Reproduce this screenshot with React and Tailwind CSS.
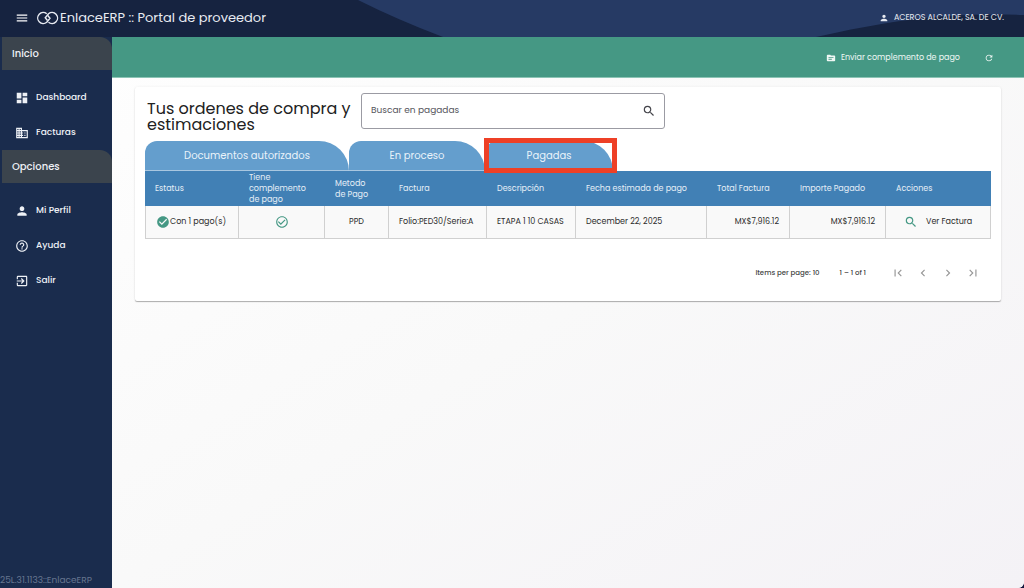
import {
  MdMenu,
  MdDashboard,
  MdDomain,
  MdPerson,
  MdHelpOutline,
  MdExitToApp,
  MdSource,
  MdRefresh,
  MdSearch,
  MdCheckCircle,
  MdCheckCircleOutline,
  MdFirstPage,
  MdChevronLeft,
  MdChevronRight,
  MdLastPage,
} from "react-icons/md";

const sections = [
  {
    title: "Inicio",
    items: [
      { label: "Dashboard", icon: MdDashboard },
      { label: "Facturas", icon: MdDomain },
    ],
  },
  {
    title: "Opciones",
    items: [
      { label: "Mi Perfil", icon: MdPerson },
      { label: "Ayuda", icon: MdHelpOutline },
      { label: "Salir", icon: MdExitToApp },
    ],
  },
];

const columns = [
  { label: "Estatus", width: "w-[94px]" },
  { label: "Tiene complemento de pago", width: "w-[86px]" },
  { label: "Metodo de Pago", width: "w-[64px]" },
  { label: "Factura", width: "w-[98px]" },
  { label: "Descripción", width: "w-[89px]" },
  { label: "Fecha estimada de pago", width: "w-[131px]" },
  { label: "Total Factura", width: "w-[83px]" },
  { label: "Importe Pagado", width: "w-[96px]" },
  { label: "Acciones", width: "w-[105px]" },
];

const pagerButtons = [
  { label: "First page", icon: MdFirstPage },
  { label: "Previous page", icon: MdChevronLeft },
  { label: "Next page", icon: MdChevronRight },
  { label: "Last page", icon: MdLastPage },
];

function Logo() {
  return (
    <svg viewBox="0 0 44 28" className="h-3.5 w-[22px] shrink-0" fill="none" stroke="currentColor" strokeWidth="2.8" aria-hidden="true">
      <path d="M19.5 5.6A11 11 0 1 0 19.5 22.4L26 14.5L21.5 9" />
      <path d="M23 22.4A11 11 0 1 0 23 5.6L16.5 13.5L21 19" />
    </svg>
  );
}

function Header() {
  return (
    <header className="relative flex h-[37px] shrink-0 items-center bg-[#162340] pb-0.5 pl-[15px] pr-5 text-white">
      <svg className="absolute inset-0 h-full w-full" viewBox="0 0 1024 37" preserveAspectRatio="none" aria-hidden="true">
        <path d="M358 0L1024 0L1024 15C950 12 890 20 816 37L443 37Q398 20 358 0Z" fill="#263a64" />
      </svg>
      <button type="button" aria-label="Menú" className="relative">
        <MdMenu className="size-3.5" />
      </button>
      <h1 className="relative ml-2 flex items-center gap-px text-[13px] text-[#e8ebf2]">
        <Logo />
        EnlaceERP :: Portal de proveedor
      </h1>
      <div className="relative ml-auto flex items-center gap-[5px] text-[8px] text-[#e8ebf2]">
        <MdPerson className="size-2.5" />
        ACEROS ALCALDE, SA. DE CV.
      </div>
    </header>
  );
}

function Sidebar() {
  return (
    <aside className="flex w-28 shrink-0 flex-col bg-[#1a2c4d] text-[#eef1f6]">
      <nav>
        {sections.map((section) => (
          <section key={section.title}>
            <h2 className="ml-0.5 flex h-[33px] items-center rounded-tr-xl bg-[#3b444d] pl-2.5 text-[10px] font-medium">
              {section.title}
            </h2>
            <ul className="pt-2.5">
              {section.items.map(({ label, icon: Icon }) => (
                <li key={label}>
                  <a href="#" className="flex h-[35px] items-center gap-[7px] pl-[15px] text-[9px] font-medium">
                    <Icon className="size-3.5" />
                    {label}
                  </a>
                </li>
              ))}
            </ul>
          </section>
        ))}
      </nav>
      <p className="mt-auto pb-0.5 text-[9px] leading-3 text-[#66758f]">25L.31.1133::EnlaceERP</p>
    </aside>
  );
}

function Toolbar() {
  return (
    <div className="flex h-[41px] items-center justify-end gap-6 border-b border-[#8cc4b5] bg-[#459884] pr-[30px] pt-0.5 text-[8px] text-[#eef7f4]">
      <button type="button" className="flex items-center gap-[5px]">
        <MdSource className="size-2.5" />
        Enviar complemento de pago
      </button>
      <button type="button" aria-label="Actualizar">
        <MdRefresh className="size-2.5" />
      </button>
    </div>
  );
}

const tabShape = "block h-[30px] rounded-tl-xl rounded-tr-[30px] border-b border-[#a9c7e0] bg-[#649ecd] text-[10px] text-[#eaf3fa]";

function Tabs() {
  return (
    <div role="tablist" className="flex">
      <button type="button" role="tab" aria-selected="false" className={tabShape + " w-[204px]"}>
        Documentos autorizados
      </button>
      <button type="button" role="tab" aria-selected="false" className={tabShape + " w-[136px]"}>
        En proceso
      </button>
      <div className="relative">
        <button type="button" role="tab" aria-selected="true" className={tabShape + " w-32"}>
          Pagadas
        </button>
        <div className="pointer-events-none absolute -left-px -right-1 -bottom-0.5 -top-[3px] border-[5px] border-[#ee4026]" />
      </div>
    </div>
  );
}

const cell = "border-b border-r border-[#d0d0d0] px-2.5 first:border-l";

function OrdersTable() {
  return (
    <table className="w-full table-fixed border-separate border-spacing-0 text-[8px]">
      <thead>
        <tr className="h-[35px] bg-[#4180b5] text-left text-[#e6eff7]">
          {columns.map((c) => (
            <th key={c.label} scope="col" className={"py-0 pl-2.5 pr-4 font-normal leading-[11px] " + c.width}>
              {c.label}
            </th>
          ))}
        </tr>
      </thead>
      <tbody>
        <tr className="h-[33px] whitespace-nowrap bg-[#f9f9f9] text-[#2c2c2c]">
          <td className={cell}>
            <span className="flex items-center">
              <MdCheckCircle className="size-3.5 shrink-0 text-[#459884]" />
              Con 1 pago(s)
            </span>
          </td>
          <td className={cell}>
            <MdCheckCircleOutline className="mx-auto size-3.5 text-[#459884]" aria-label="Sí" />
          </td>
          <td className={cell + " text-center"}>PPD</td>
          <td className={cell}>Folio:PED30/Serie:A</td>
          <td className={cell}>ETAPA 1 10 CASAS</td>
          <td className={cell}>December 22, 2025</td>
          <td className={cell + " text-right"}>MX$7,916.12</td>
          <td className={cell + " text-right"}>MX$7,916.12</td>
          <td className={cell}>
            <button type="button" className="ml-2 flex items-center gap-2">
              <MdSearch className="size-3.5 text-[#459884]" />
              Ver Factura
            </button>
          </td>
        </tr>
      </tbody>
    </table>
  );
}

function Paginator() {
  return (
    <div className="flex items-center justify-end pr-[11px] pt-[27px] text-[7px] font-medium text-[#444]">
      <span>Items per page: 10</span>
      <span className="ml-5">1 – 1 of 1</span>
      <div className="ml-[25px] flex gap-[11px] text-[#969696]">
        {pagerButtons.map(({ label, icon: Icon }) => (
          <button key={label} type="button" aria-label={label}>
            <Icon className="block size-3.5" />
          </button>
        ))}
      </div>
    </div>
  );
}

export default function App() {
  return (
    <div className="bg-[#14143c] font-['Poppins','Inter',sans-serif]">
      <div className="flex min-h-screen flex-col overflow-hidden rounded-br-md bg-[#fbfbfb]">
        <Header />
        <div className="flex grow">
          <Sidebar />
          <div className="min-w-0 grow bg-linear-to-br from-[#fefefe] via-[#f9f9f9] to-[#f4f2f6]">
            <Toolbar />
            <main className="ml-[23px] mr-[23px] mt-[9px] rounded-xs bg-white px-2.5 pb-[21px] pt-1.5 shadow-[0_1px_1px_rgba(0,0,0,0.3),0_0_3px_rgba(0,0,0,0.06)]">
              <div className="flex items-start pl-0.5">
                <h2 className="w-[214px] pt-2 text-[16px] leading-4 text-[#212121]">
                  Tus ordenes de compra y estimaciones
                </h2>
                <label className="flex h-9 w-[304px] items-center rounded-[3px] border border-[#9b9ba3] pl-[9px] pr-2">
                  <input
                    type="text"
                    aria-label="Buscar en pagadas"
                    placeholder="Buscar en pagadas"
                    className="min-w-0 grow bg-transparent text-[9px] outline-none placeholder:text-[#55555c]"
                  />
                  <MdSearch className="size-3.5 text-[#44444a]" />
                </label>
              </div>
              <div className="pt-2">
                <Tabs />
                <OrdersTable />
              </div>
              <Paginator />
            </main>
          </div>
        </div>
      </div>
    </div>
  );
}
